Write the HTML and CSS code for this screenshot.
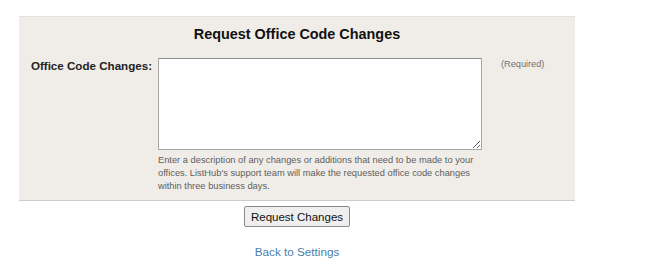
FILE: index.html
```html
<!DOCTYPE html>
<html>
<head>
<meta charset="utf-8">
<link rel="stylesheet" href="styles.css">
</head>
<body>
<div class="page">
  <form class="panel">
    <h2 class="title">Request Office Code Changes</h2>
    <div class="row">
      <label class="label" for="changes">Office Code Changes:</label>
      <div class="field">
        <textarea id="changes" class="input"></textarea>
        <p class="help">Enter a description of any changes or additions that need to be made to your offices. ListHub's support team will make the requested office code changes within three business days.</p>
      </div>
      <div class="req">(Required)</div>
    </div>
  </form>
  <div class="actions">
    <button class="btn" type="button">Request Changes</button>
    <a class="back" href="#">Back to Settings</a>
  </div>
</div>
</body>
</html>
```

FILE: styles.css
```css
html, body {
  margin: 0;
  padding: 0;
  background: #ffffff;
  font-family: "Liberation Sans", Arial, sans-serif;
}

.page {
  margin: 16px 0 0 19px;
  width: 556px;
}

.panel {
  background: #f0ede8;
  border-top: 1px solid #e4e1dc;
  border-bottom: 1px solid #cfccc7;
  padding: 8px 0 7px;
  margin: 0;
}

.title {
  margin: 0;
  text-align: center;
  font-size: 14.4px;
  line-height: 18px;
  font-weight: bold;
  color: #111111;
}

.row {
  display: grid;
  grid-template-columns: 139px 324px 1fr;
  margin-top: 15px;
}

.label {
  text-align: right;
  padding-right: 6px;
  font-size: 11.6px;
  line-height: 16px;
  font-weight: bold;
  color: #222222;
}

.field {
  display: flex;
  flex-direction: column;
}

.input {
  display: block;
  box-sizing: border-box;
  width: 324px;
  height: 92px;
  margin: 0;
  border: 1px solid #a7a7a7;
  border-top-color: #8f8f8f;
  background: #ffffff;
  resize: both;
}

.help {
  margin: 4px 0 0;
  font-size: 9.3px;
  line-height: 13px;
  color: #5e5e5e;
}

.req {
  padding-left: 19px;
  font-size: 9.2px;
  line-height: 13px;
  color: #707070;
}

.actions {
  display: flex;
  flex-direction: column;
  align-items: center;
}

.btn {
  margin-top: 5px;
  height: 21px;
  padding: 0 6px;
  font-family: "Liberation Sans", Arial, sans-serif;
  font-size: 11.5px;
  color: #111111;
  background: #efefef;
  border: 1px solid #8a8a8a;
  border-radius: 2px;
}

.back {
  margin-top: 18px;
  font-size: 11.7px;
  line-height: 14px;
  color: #4a80ab;
  text-decoration: none;
}
```
